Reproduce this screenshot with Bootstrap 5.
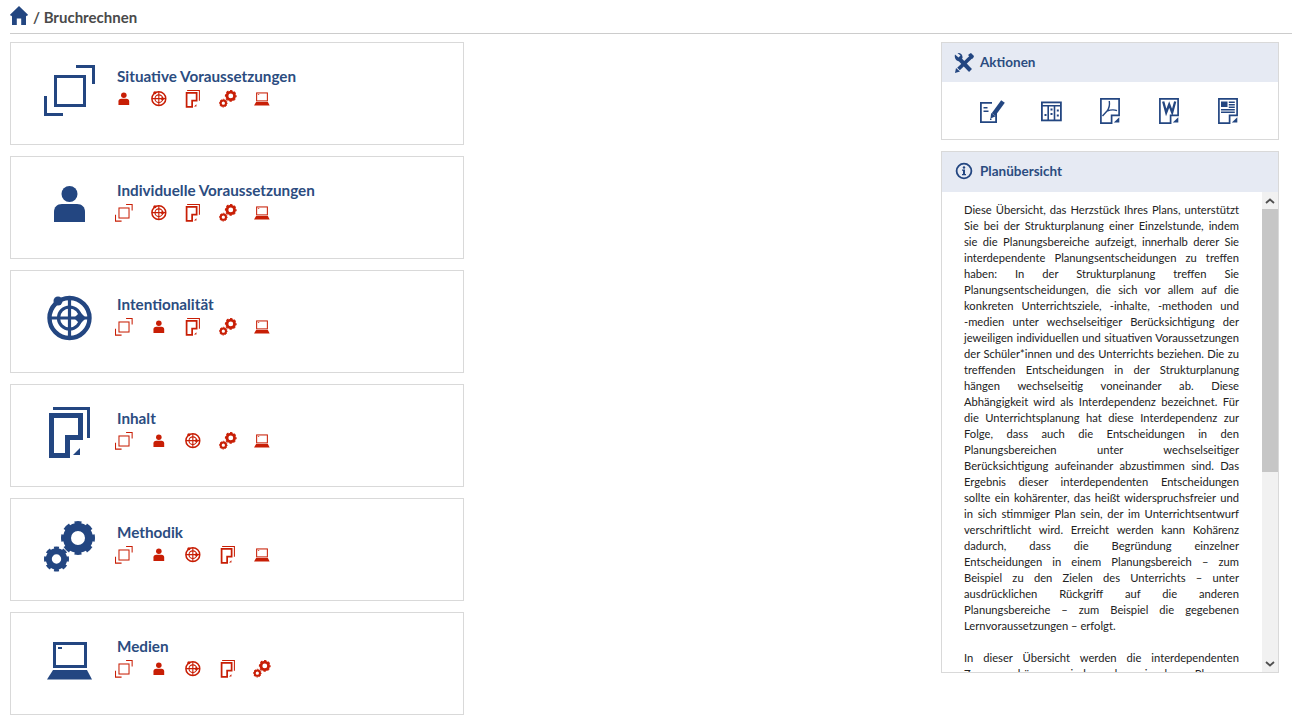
<!DOCTYPE html>
<html lang="de">
<head>
<meta charset="utf-8">
<title>Bruchrechnen</title>
<link rel="stylesheet" href="https://cdn.jsdelivr.net/npm/bootstrap@5.3.0/dist/css/bootstrap.min.css">
<style>
html,body{height:100%;overflow:hidden;background:#fff}
body{font-family:"Lato","Carlito","Liberation Sans",sans-serif;color:#222}
.crumb{margin-left:10px;height:34px;padding-top:2px;border-bottom:1px solid #ccc;font-size:15px;font-weight:700;color:#4a4a4a;gap:5px}
.crumb svg{width:18px;height:19px;margin-top:-5px;fill:#234681}
.stage{padding:8px 13px 0 10px}
.lefty{width:454px;gap:11px}
.righty{width:338px;gap:11px}
.tile{height:103px;border:1px solid #d9d9d9;border-radius:0;padding:22px 0 0 33px}
.bigico{width:52px;height:52px;color:#234681;flex:none}
.tile-body{margin-left:21px}
.tile-title{font-size:15.25px;line-height:20px;font-weight:700;color:#2b4c80;margin-top:1px}
.minis{margin:4px 0 0 -2px;color:#c81e05}
.minis span{display:block;width:34.5px;height:18px}
.minis svg{display:block;width:18px;height:18px}
.box{border:1px solid #d9d9d9;border-radius:0}
.box-head{height:39px;background:#e6eaf3;font-size:13.5px;font-weight:700;color:#2b4c80;padding-left:12px;gap:6px;border:0;border-radius:0}
.box-head svg{width:20px;height:20px;color:#234681}
.acts{height:57px;color:#234681;padding-top:1px}
.acts span{display:block;width:59px;text-align:center}
.acts svg{width:26px;height:26px}
.over-head{height:40px;padding-bottom:2px}
.panewrap{height:480px}
.textpane{flex:1 1 0;min-width:0;overflow:hidden;padding:10px 23px 0 22px;font-size:11.2px;line-height:16px;text-align:justify;color:#222}
.textpane p{margin:0 0 16px}
.textpane p.cutline{text-align-last:justify;margin:0}
.rail{width:16px;flex:none;background:#f1f1f1}
.rail-btn{height:17px;flex:none;color:#505050}
.rail-btn svg{width:10px;height:6px}
.rail-thumb{height:263px;flex:none;background:#c6c6c6}
.g{fill:currentColor}.o{fill:none;stroke:currentColor}
</style>
</head>
<body>
<svg width="0" height="0" class="position-absolute">
<defs>
<symbol id="i-expand" viewBox="0 0 52 52">
<rect class="o" x="11.5" y="11.5" width="29" height="29" stroke-width="3"/>
<path class="g" d="M32 0h19v19h-3V3H32zM0 31h3v17h16v3H0z"/>
</symbol>
<symbol id="i-person" viewBox="0 0 52 52">
<circle class="g" cx="25.5" cy="15" r="8"/>
<path class="g" d="M10 43V33c0-5 3-8 8-8h15c5 0 8 3 8 8v10z"/>
</symbol>
<symbol id="i-target" viewBox="0 0 52 52">
<circle class="o" cx="25.5" cy="25" r="20" stroke-width="4.400"/>
<circle class="o" cx="25.5" cy="25" r="11" stroke-width="3.200"/>
<path class="o" stroke-width="3.200" d="M25.5 5v40M5.500 25h40"/>
<circle class="g" cx="14" cy="8" r="4.500"/>
<path class="g" d="M36 19l6 6-6 6-6-6z"/>
</symbol>
<symbol id="i-pages" viewBox="0 0 52 52">
<path class="g" d="M9 0h37v31h-3V3H9z"/>
<path class="g" fill-rule="evenodd" d="M5 6h34v27H26v18H5zM10 11v35h11V28h13V11z"/>
<path class="g" d="M29 48l7-7v7z"/>
</symbol>
<symbol id="i-gears" viewBox="0 0 52 52">
<circle class="o" cx="34" cy="17" r="11" stroke-width="8"/>
<circle class="o" cx="34" cy="17" r="15.300" stroke-width="3.400" pathLength="16" stroke-dasharray="1.150 .85" stroke-dashoffset="0.575"/>
<circle class="o" cx="12.500" cy="38" r="7.700" stroke-width="6"/>
<circle class="o" cx="12.500" cy="38" r="11.200" stroke-width="2.600" pathLength="16" stroke-dasharray="1.150 .85" stroke-dashoffset="0.575"/>
</symbol>
<symbol id="i-laptop" viewBox="0 0 52 52">
<rect class="o" x="10.500" y="8.500" width="31" height="23" stroke-width="3"/>
<rect class="g" x="14" y="12" width="4" height="2"/>
<path class="g" d="M9 35h34l5 9.500H3z"/>
</symbol>
<symbol id="i-home" viewBox="0 0 18 19">
<path fill-rule="evenodd" d="M9 0l9 8.800-1.200 1.500-.8-.7V19H2V9.600l-.8.700L0 8.800zM6.800 12.500V19h4.400v-6.500z"/>
</symbol>
<symbol id="i-tools" viewBox="0 0 20 20">
<path class="o" stroke-width="4" d="M5.500 6l11 11.500"/>
<path class="g" d="M1 1.500l3.500 3 2-2L3.500 0C6-.5 9 1.500 8.500 5L5.500 8C2.500 9 0 5 1 1.500z"/>
<path class="o" stroke-width="3.800" d="M17.500 3.500L4.500 16"/>
<path class="g" d="M16 .5l1-.5 3 3-.5 1.500-1.500 1.500-4-4zM1 20l1-5 4 3.500z"/>
</symbol>
<symbol id="i-info" viewBox="0 0 20 20">
<circle class="o" cx="10" cy="10" r="7.400" stroke-width="1.800"/>
<circle class="g" cx="10" cy="6.500" r="1.200"/>
<path class="g" d="M8 8.500h3V13h1v1.200H8V13h1V9.700H8z"/>
</symbol>
<symbol id="i-edit" viewBox="0 0 26 26">
<path class="o" stroke-width="1.800" d="M13 4.900H1.900v19.200H17.100V13"/>
<path class="g" d="M4.500 9h4v1.500h-4zM4.500 12.500h5v1.500h-5zM11 20.500h1.500V22H11z"/>
<path class="o" stroke-width="4.500" d="M24 3.500L14.500 16.500"/>
<path class="g" d="M12.100 15l4.700 3.200-5.300 2.300z"/>
</symbol>
<symbol id="i-table" viewBox="0 0 26 26">
<rect class="o" x="3.900" y="4.400" width="19" height="18" stroke-width="1.800"/>
<path class="o" stroke-width="1.600" d="M3.900 7.800h19M10.200 7.800v14.600M16.500 7.800v14.600"/>
<path class="g" d="M12.500 10.500h2v2h-2zM12.500 15h2v2h-2zM18.800 11.500h2v2h-2zM18.800 16.500h2v2h-2zM6.500 16h2v2h-2z"/>
</symbol>
<symbol id="i-pdf" viewBox="0 0 26 26">
<path class="o" stroke-width="1.700" d="M3.900.9h18.200v16.400h-7.500v7.800H3.900z"/>
<path class="g" d="M16.800 24.500l5.500-5.300v5.300z"/>
<path class="o" stroke-width="1.400" d="M12.300 3c.7 5 .2 7-2.300 10L5.500 18M10 13c3-1 6-2 10-.3"/>
</symbol>
<symbol id="i-word" viewBox="0 0 26 26">
<path class="o" stroke-width="1.700" d="M3.900.9h18.200v16.400h-7.500v7.800H3.900z"/>
<path class="g" d="M16.800 24.500l5.500-5.300v5.300z"/>
<path class="o" stroke-width="2.300" d="M7.200 3.500l3 11 3-8 3 8 3-11"/>
</symbol>
<symbol id="i-doc" viewBox="0 0 26 26">
<path class="o" stroke-width="1.700" d="M3.900.9h18.200v16.400h-7.500v7.800H3.900z"/>
<path class="g" d="M16.800 24.500l5.500-5.300v5.300z"/>
<path class="g" d="M6 3.500h6.500V9H6zM13.800 3.500h6v1.400h-6zM13.800 6h6v1.400h-6zM13.800 8.500h6v1.400h-6zM6 11h13.800v1.400H6zM6 13.600h13.800V15H6z"/>
</symbol>
</defs>
</svg>

<header class="crumb d-flex align-items-center">
<svg><use href="#i-home"/></svg><span>/ Bruchrechnen</span>
</header>

<main class="stage d-flex justify-content-between align-items-start">
<div class="lefty d-flex flex-column">

<a class="card tile flex-row text-decoration-none" href="#">
<svg class="bigico"><use href="#i-expand"/></svg>
<div class="tile-body"><div class="tile-title">Situative Voraussetzungen</div>
<div class="minis d-flex"><span><svg><use href="#i-person"/></svg></span><span><svg><use href="#i-target"/></svg></span><span><svg><use href="#i-pages"/></svg></span><span><svg><use href="#i-gears"/></svg></span><span><svg><use href="#i-laptop"/></svg></span></div></div>
</a>

<a class="card tile flex-row text-decoration-none" href="#">
<svg class="bigico"><use href="#i-person"/></svg>
<div class="tile-body"><div class="tile-title">Individuelle Voraussetzungen</div>
<div class="minis d-flex"><span><svg><use href="#i-expand"/></svg></span><span><svg><use href="#i-target"/></svg></span><span><svg><use href="#i-pages"/></svg></span><span><svg><use href="#i-gears"/></svg></span><span><svg><use href="#i-laptop"/></svg></span></div></div>
</a>

<a class="card tile flex-row text-decoration-none" href="#">
<svg class="bigico"><use href="#i-target"/></svg>
<div class="tile-body"><div class="tile-title">Intentionalität</div>
<div class="minis d-flex"><span><svg><use href="#i-expand"/></svg></span><span><svg><use href="#i-person"/></svg></span><span><svg><use href="#i-pages"/></svg></span><span><svg><use href="#i-gears"/></svg></span><span><svg><use href="#i-laptop"/></svg></span></div></div>
</a>

<a class="card tile flex-row text-decoration-none" href="#">
<svg class="bigico"><use href="#i-pages"/></svg>
<div class="tile-body"><div class="tile-title">Inhalt</div>
<div class="minis d-flex"><span><svg><use href="#i-expand"/></svg></span><span><svg><use href="#i-person"/></svg></span><span><svg><use href="#i-target"/></svg></span><span><svg><use href="#i-gears"/></svg></span><span><svg><use href="#i-laptop"/></svg></span></div></div>
</a>

<a class="card tile flex-row text-decoration-none" href="#">
<svg class="bigico"><use href="#i-gears"/></svg>
<div class="tile-body"><div class="tile-title">Methodik</div>
<div class="minis d-flex"><span><svg><use href="#i-expand"/></svg></span><span><svg><use href="#i-person"/></svg></span><span><svg><use href="#i-target"/></svg></span><span><svg><use href="#i-pages"/></svg></span><span><svg><use href="#i-laptop"/></svg></span></div></div>
</a>

<a class="card tile flex-row text-decoration-none" href="#">
<svg class="bigico"><use href="#i-laptop"/></svg>
<div class="tile-body"><div class="tile-title">Medien</div>
<div class="minis d-flex"><span><svg><use href="#i-expand"/></svg></span><span><svg><use href="#i-person"/></svg></span><span><svg><use href="#i-target"/></svg></span><span><svg><use href="#i-pages"/></svg></span><span><svg><use href="#i-gears"/></svg></span></div></div>
</a>

</div>

<aside class="righty d-flex flex-column">
<section class="box">
<div class="box-head d-flex align-items-center"><svg><use href="#i-tools"/></svg><span>Aktionen</span></div>
<div class="acts d-flex justify-content-center align-items-center">
<span><svg><use href="#i-edit"/></svg></span><span><svg><use href="#i-table"/></svg></span><span><svg><use href="#i-pdf"/></svg></span><span><svg><use href="#i-word"/></svg></span><span><svg><use href="#i-doc"/></svg></span>
</div>
</section>
<section class="box">
<div class="box-head over-head d-flex align-items-center"><svg><use href="#i-info"/></svg><span>Planübersicht</span></div>
<div class="panewrap d-flex">
<div class="textpane">
<p>Diese Übersicht, das Herzstück Ihres Plans, unterstützt Sie bei der Strukturplanung einer Einzelstunde, indem sie die Planungsbereiche aufzeigt, innerhalb derer Sie interdependente Planungsentscheidungen zu treffen haben: In der Strukturplanung treffen Sie Planungsentscheidungen, die sich vor allem auf die konkreten Unterrichtsziele, <span class="text-nowrap">-inhalte,</span> <span class="text-nowrap">-methoden</span> und <span class="text-nowrap">-medien</span> unter wechselseitiger Berücksichtigung der jeweiligen individuellen und situativen Voraussetzungen der Schüler*innen und des Unterrichts beziehen. Die zu treffenden Entscheidungen in der Strukturplanung hängen wechselseitig voneinander ab. Diese Abhängigkeit wird als Interdependenz bezeichnet. Für die Unterrichtsplanung hat diese Interdependenz zur Folge, dass auch die Entscheidungen in den Planungsbereichen unter wechselseitiger Berücksichtigung aufeinander abzustimmen sind. Das Ergebnis dieser interdependenten Entscheidungen <span class="text-nowrap">sollte ein</span> kohärenter, das heißt widerspruchsfreier und <span class="text-nowrap">in sich</span> stimmiger Plan sein, der im Unterrichtsentwurf verschriftlicht wird. Erreicht werden kann Kohärenz dadurch, dass die Begründung einzelner Entscheidungen in einem Planungsbereich – zum Beispiel zu den Zielen des Unterrichts – unter ausdrücklichen Rückgriff auf die anderen Planungsbereiche – zum Beispiel die gegebenen Lernvoraussetzungen – erfolgt.</p>
<p class="cutline">In dieser Übersicht werden die interdependenten Zusammenhänge zwischen den einzelnen Planungs</p>
</div>
<div class="rail d-flex flex-column">
<div class="rail-btn d-flex align-items-center justify-content-center"><svg viewBox="0 0 10 6"><path class="o" stroke-width="1.800" d="M1 5l4-3.500 4 3.500"/></svg></div>
<div class="rail-thumb"></div>
<div class="flex-grow-1"></div>
<div class="rail-btn d-flex align-items-center justify-content-center"><svg viewBox="0 0 10 6"><path class="o" stroke-width="1.800" d="M1 1l4 3.500 4-3.500"/></svg></div>
</div>
</div>
</section>
</aside>
</main>
<script src="https://cdn.jsdelivr.net/npm/bootstrap@5.3.0/dist/js/bootstrap.bundle.min.js"></script>
</body>
</html>
